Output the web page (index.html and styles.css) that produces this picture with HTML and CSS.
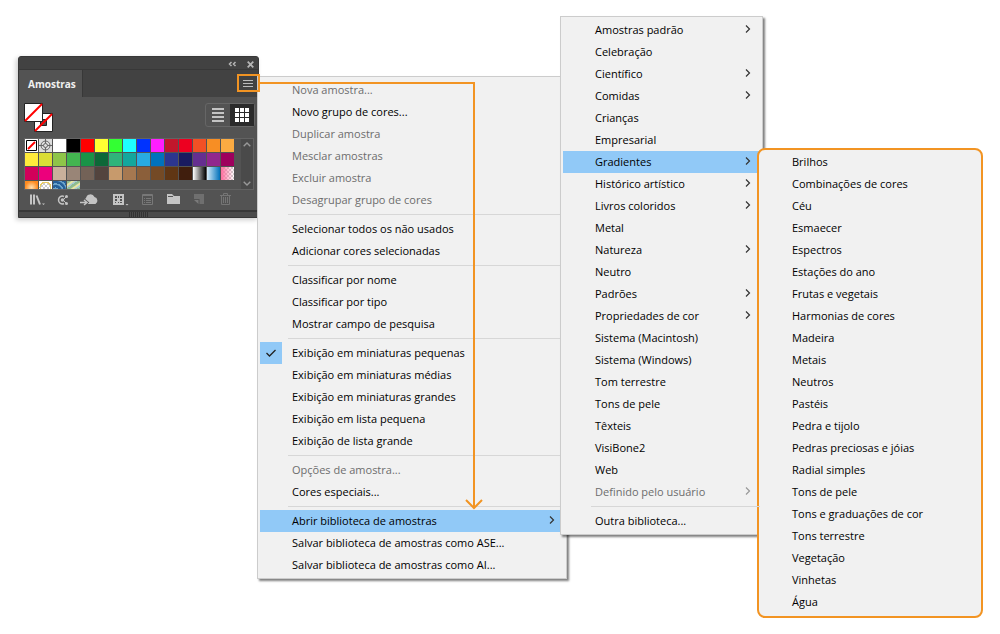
FILE: index.html
```html
<!DOCTYPE html>
<html lang="pt-BR">
<head>
    <meta charset="UTF-8">
    <meta name="viewport" content="width=device-width, initial-scale=1.0">
    <title>Amostras</title>
    <link rel="stylesheet" href="styles.css">
</head>
<body>
    <svg class="defs" width="0" height="0" aria-hidden="true">
        <symbol id="chevron" viewBox="0 0 6 10">
            <path d="M1 1.5 4.5 5 1 8.5" fill="none" stroke="currentColor" stroke-width="1.2"/>
        </symbol>
        <symbol id="check" viewBox="0 0 12 10">
            <path d="M1.5 5 4.5 8 10.5 2" fill="none" stroke="currentColor" stroke-width="1.3"/>
        </symbol>
    </svg>
    <div class="panel">
        <div class="panel-window">
            <div class="panel-bar">
                <button class="bar-btn" aria-label="Recolher">
                    <svg width="9" height="6" viewBox="0 0 9 6"><path d="M3.5 1 1.500 3l2 2M7.500 1l-2 2 2 2" fill="none" stroke="currentColor" stroke-width="1.5"/></svg>
                </button>
                <button class="bar-btn" aria-label="Fechar">
                    <svg width="7" height="7" viewBox="0 0 7 7"><path d="m.7.7 5.600 5.600M6.300.7.7 6.300" fill="none" stroke="currentColor" stroke-width="1.800"/></svg>
                </button>
            </div>
            <div class="panel-tabs">
                <button class="tab">Amostras</button>
                <button class="menu-btn" aria-label="Menu do painel">
                    <svg width="10" height="8" viewBox="0 0 10 8"><path d="M0 .5h10M0 3.500h10M0 6.500h10" stroke="currentColor"/></svg>
                </button>
            </div>
            <div class="panel-tools">
                <svg width="30" height="30" viewBox="0 0 30 30">
                    <path d="M10.500 10.500h18v18h-18z" fill="#fff" stroke="#222"/>
                    <path d="M16.500 16.500h6v6h-6z" fill="#535353" stroke="#222"/>
                    <path d="M11 28 28 11" stroke="#f00" stroke-width="2"/>
                    <path d="M.5.5h18v18H.5z" fill="#fff" stroke="#222"/>
                    <path d="M1 18 18 1" stroke="#f00" stroke-width="2"/>
                </svg>
                <div class="views">
                    <button class="view" aria-label="Lista">
                        <svg width="12" height="14" viewBox="0 0 12 14"><path d="M0 1h12M0 5h12M0 9h12M0 13h12" stroke="#c4c4c4" stroke-width="2"/></svg>
                    </button>
                    <button class="view view-active" aria-label="Miniaturas">
                        <svg width="14" height="14" viewBox="0 0 14 14"><path d="M0 2h14M0 7h14M0 12h14" stroke="#fff" stroke-width="4" stroke-dasharray="4 1"/></svg>
                    </button>
                </div>
            </div>
            <div class="swatch-box">
                <div class="swatches" id="swatches"></div>
                <div class="scroll">
                    <svg width="8" height="5" viewBox="0 0 8 5"><path d="M.7 4.300 4 1l3.300 3.300" fill="none" stroke="#999" stroke-width="1.400"/></svg>
                    <svg width="8" height="5" viewBox="0 0 8 5"><path d="M.7.7 4 4 7.300.7" fill="none" stroke="#999" stroke-width="1.400"/></svg>
                </div>
            </div>
            <div class="panel-actions">
                <button class="action" aria-label="Bibliotecas">
                    <svg width="17" height="14" viewBox="0 0 17 14"><path d="M2 1.500v10M5 1.500v10M7.500 2.500l3.500 9" fill="none" stroke="#c4c4c4" stroke-width="2"/><path d="M13 10.500h3L14.500 12z" fill="#c4c4c4"/></svg>
                </button>
                <button class="action" aria-label="Temas de cores">
                    <svg width="12" height="14" viewBox="0 0 12 14"><path d="M7 3.500C4.500 2 1.500 4 1.500 7s3 5 5.500 3.500" fill="none" stroke="#c4c4c4" stroke-width="1.500"/><circle cx="5.500" cy="7" r="1.800" fill="#c4c4c4"/><path d="m6 7 3-3M6 7l3 3" stroke="#c4c4c4"/><circle cx="9.500" cy="3.500" r="1.500" fill="#c4c4c4"/><circle cx="9.500" cy="10.500" r="1.500" fill="#c4c4c4"/></svg>
                </button>
                <button class="action" aria-label="Adicionar à biblioteca">
                    <svg width="19" height="14" viewBox="0 0 19 14"><path d="M6 10a3 3 0 0 1 0-5 4.500 4.500 0 0 1 8.500-1A3.800 3.800 0 0 1 15.500 11H8z" fill="#c4c4c4"/><path d="M0 9.500h6M4 7l3 2.500L4 12" fill="none" stroke="#535353" stroke-width="3"/><path d="M0 9.500h6M4 7l3 2.500L4 12" fill="none" stroke="#c4c4c4" stroke-width="1.500"/></svg>
                </button>
                <button class="action kinds" aria-label="Tipos de amostras">
                    <svg width="16" height="14" viewBox="0 0 16 14"><path d="M0 1h11v11H0z" fill="#c4c4c4"/><path d="M2 3h2v2H2zM5 3h1v2H5zM7 3h2v2H7zM2 6h2v2H2zM7 6h2v2H7zM2 9h1v1H2zM5 9h1v1H5zM7 9h2v1H7z" fill="#535353"/><path d="M12.500 11h3L14 12.500z" fill="#c4c4c4"/></svg>
                </button>
                <button class="action" aria-label="Opções de amostra">
                    <svg width="11" height="14" viewBox="0 0 11 14"><path d="M.5 1.500h10v10H.5z" fill="none" stroke="#787878"/><path d="M1 2.500h9M2 5.500h1M4 5.500h5M2 7.500h1M4 7.500h5M2 9.500h1M4 9.500h5" stroke="#787878"/></svg>
                </button>
                <button class="action" aria-label="Novo grupo de cores">
                    <svg width="13" height="14" viewBox="0 0 13 14"><path d="M0 1h5l2 2h6v8H0z" fill="#c4c4c4"/><path d="M1 3.500h5" stroke="#535353"/></svg>
                </button>
                <button class="action" aria-label="Nova amostra">
                    <svg width="10" height="14" viewBox="0 0 10 14"><path d="M0 1h10v10H5.500V6H0z" fill="#6f6f6f"/><path d="M0 7h4.500v4z" fill="#7a7a7a"/></svg>
                </button>
                <button class="action" aria-label="Excluir amostra">
                    <svg width="11" height="14" viewBox="0 0 11 14"><path d="M0 2.500h11M3.500 2V.5h4V2M1.500 3v8.500h8V3M3.500 4v6M5.500 4v6M7.500 4v6" fill="none" stroke="#757575"/></svg>
                </button>
            </div>
            <div class="panel-grip"><span></span></div>
        </div>

        <ul class="menu main-menu">
            <li><button disabled>Nova amostra...</button></li>
            <li><button>Novo grupo de cores...</button></li>
            <li><button disabled>Duplicar amostra</button></li>
            <li><button disabled>Mesclar amostras</button></li>
            <li><button disabled>Excluir amostra</button></li>
            <li><button disabled>Desagrupar grupo de cores</button></li>
            <li class="separator"></li>
            <li><button>Selecionar todos os não usados</button></li>
            <li><button>Adicionar cores selecionadas</button></li>
            <li class="separator"></li>
            <li><button>Classificar por nome</button></li>
            <li><button>Classificar por tipo</button></li>
            <li><button>Mostrar campo de pesquisa</button></li>
            <li class="separator"></li>
            <li><button><span class="checked"><svg width="12" height="10"><use href="#check"/></svg></span>Exibição em miniaturas pequenas</button></li>
            <li><button>Exibição em miniaturas médias</button></li>
            <li><button>Exibição em miniaturas grandes</button></li>
            <li><button>Exibição em lista pequena</button></li>
            <li><button>Exibição de lista grande</button></li>
            <li class="separator"></li>
            <li><button disabled>Opções de amostra...</button></li>
            <li><button>Cores especiais...</button></li>
            <li class="separator"></li>
            <li class="open">
                <button>Abrir biblioteca de amostras<svg class="chevron"><use href="#chevron"/></svg></button>
                <ul class="menu library-menu">
                    <li><button>Amostras padrão<svg class="chevron"><use href="#chevron"/></svg></button></li>
                    <li><button>Celebração</button></li>
                    <li><button>Científico<svg class="chevron"><use href="#chevron"/></svg></button></li>
                    <li><button>Comidas<svg class="chevron"><use href="#chevron"/></svg></button></li>
                    <li><button>Crianças</button></li>
                    <li><button>Empresarial</button></li>
                    <li class="open">
                        <button>Gradientes<svg class="chevron"><use href="#chevron"/></svg></button>
                        <ul class="menu gradient-menu">
                            <li><button>Brilhos</button></li>
                            <li><button>Combinações de cores</button></li>
                            <li><button>Céu</button></li>
                            <li><button>Esmaecer</button></li>
                            <li><button>Espectros</button></li>
                            <li><button>Estações do ano</button></li>
                            <li><button>Frutas e vegetais</button></li>
                            <li><button>Harmonias de cores</button></li>
                            <li><button>Madeira</button></li>
                            <li><button>Metais</button></li>
                            <li><button>Neutros</button></li>
                            <li><button>Pastéis</button></li>
                            <li><button>Pedra e tijolo</button></li>
                            <li><button>Pedras preciosas e jóias</button></li>
                            <li><button>Radial simples</button></li>
                            <li><button>Tons de pele</button></li>
                            <li><button>Tons e graduações de cor</button></li>
                            <li><button>Tons terrestre</button></li>
                            <li><button>Vegetação</button></li>
                            <li><button>Vinhetas</button></li>
                            <li><button>Água</button></li>
                        </ul>
                    </li>
                    <li><button>Histórico artístico<svg class="chevron"><use href="#chevron"/></svg></button></li>
                    <li><button>Livros coloridos<svg class="chevron"><use href="#chevron"/></svg></button></li>
                    <li><button>Metal</button></li>
                    <li><button>Natureza<svg class="chevron"><use href="#chevron"/></svg></button></li>
                    <li><button>Neutro</button></li>
                    <li><button>Padrões<svg class="chevron"><use href="#chevron"/></svg></button></li>
                    <li><button>Propriedades de cor<svg class="chevron"><use href="#chevron"/></svg></button></li>
                    <li><button>Sistema (Macintosh)</button></li>
                    <li><button>Sistema (Windows)</button></li>
                    <li><button>Tom terrestre</button></li>
                    <li><button>Tons de pele</button></li>
                    <li><button>Têxteis</button></li>
                    <li><button>VisiBone2</button></li>
                    <li><button>Web</button></li>
                    <li><button disabled>Definido pelo usuário<svg class="chevron"><use href="#chevron"/></svg></button></li>
                    <li class="separator"></li>
                    <li><button>Outra biblioteca...</button></li>
                </ul>
            </li>
            <li><button>Salvar biblioteca de amostras como ASE...</button></li>
            <li><button>Salvar biblioteca de amostras como AI...</button></li>
        </ul>

        <!-- path from the menu button to the open item -->
        <svg class="guide" width="246" height="437" viewBox="0 0 246 437" aria-hidden="true">
            <path d="M1 1h21v16H1z"/>
            <path d="M22 9h215v425M229 426l8 8 8-8"/>
        </svg>
    </div>
    <script>
        const rows = [
            ['none', 'registration', '#ffffff', '#000000', '#ff0000', '#ffff33', '#33ff33', '#1effff', '#0033ff', '#ff1eff', '#c1172c', '#ed0020', '#f15025', '#f78e24', '#fbab42'],
            ['#ffeb3b', '#dadd36', '#8ec549', '#43b550', '#199347', '#0d6838', '#2fb47a', '#14a79d', '#28abe2', '#0072bc', '#2c3690', '#191b60', '#652f90', '#91278d', '#9e005d'],
            ['#d2005a', '#ec007c', '#c9b09b', '#998577', '#736257', '#53443e', '#c79a6c', '#a67850', '#8b5f3a', '#744a25', '#603614', '#401e0d', 'fade', 'sky', 'pink'],
            ['glow', 'ring', 'waves', 'leaves']
        ];
        const swatches = document.getElementById('swatches');
        const icons = {
            none: '<svg width="13" height="13"><path d="M0 0h13v13H0z" fill="#fff"/><path d="M1.500 1.500h10v10h-10z" fill="#fff" stroke="#000"/><path d="m3 10 7-7" stroke="#f00" stroke-width="2"/></svg>',
            registration: '<svg width="13" height="13"><path d="M0 0h13v13H0z" fill="#ddd"/><path d="M6.500 0v13M0 6.500h13" stroke="#666"/><circle cx="6.500" cy="6.500" r="4.500" fill="none" stroke="#666"/><circle cx="6.500" cy="6.500" r="2" fill="#ddd" stroke="#666"/></svg>'
        };

        rows.flat().forEach(color => {
            const swatch = document.createElement('button');
            swatch.className = 'swatch';
            swatch.setAttribute('aria-label', color);
            if (color[0] === '#') {
                swatch.style.backgroundColor = color;
            } else if (icons[color]) {
                swatch.innerHTML = icons[color];
            } else {
                swatch.classList.add(color);
            }
            swatches.appendChild(swatch);
        });
    </script>
</body>
</html>
```
FILE: styles.css
```css
body {
    box-sizing: border-box;
    min-height: 100vh;
    margin: 0;
    padding: 56px 18px 0;
    background-color: #fff;
    font-family: "Open Sans", "Noto Sans", sans-serif;
    font-size: 11px;
    color: #000;
}
button {
    display: flex;
    align-items: center;
    margin: 0;
    padding: 0;
    border: 0;
    background: none;
    font: inherit;
    color: inherit;
}
.defs {
    position: absolute;
}
.panel {
    position: relative;
    width: 241px;
}
.panel-window {
    border: 1px solid #383838;
    border-radius: 3px 3px 0 0;
    background-color: #535353;
    box-shadow: -2px 2px 5px rgba(0, 0, 0, 0.2);
}
.panel-bar {
    display: flex;
    justify-content: flex-end;
    gap: 10px;
    height: 12px;
    padding-right: 4px;
    background-color: #424242;
    border-bottom: 1px solid #383838;
}
.bar-btn {
    padding-top: 2px;
    color: #b5b5b5;
}
.panel-tabs {
    display: flex;
    justify-content: space-between;
    height: 27px;
    background-color: #424242;
}
.tab {
    padding: 0 6px 0 9px;
    background-color: #535353;
    border-right: 1px solid #383838;
    font-size: 10px;
    font-weight: bold;
    color: #f0f0f0;
}
.menu-btn {
    justify-content: center;
    width: 20px;
    color: #bbb;
}
.panel-tools {
    display: flex;
    justify-content: space-between;
    padding: 6px 3px 5px 5px;
}
.views {
    display: flex;
    height: 22px;
    border: 1px solid #666;
    border-radius: 3px;
}
.view {
    justify-content: center;
    width: 24px;
}
.view-active {
    background-color: #2b2b2b;
}
.swatch-box {
    display: flex;
    justify-content: space-between;
    height: 50px;
    margin: 0 4px 0 5px;
    border: 1px solid #636363;
    overflow: hidden;
}
.swatches {
    display: grid;
    grid-template-columns: repeat(15, 13px);
    grid-auto-rows: 13px;
    gap: 1px;
}
.swatch {
    width: 13px;
    height: 13px;
}
.fade {
    background: linear-gradient(to right, #fff, #000);
}
.sky {
    background: linear-gradient(to right, #d5ebf8, #0071bb);
}
.pink {
    background: linear-gradient(to right, #ff6f9f, rgba(255, 111, 159, 0)), repeating-conic-gradient(#ccc 0 25%, #fff 0 50%) 0 0 / 4px 4px;
}
.glow {
    background: radial-gradient(circle at 50% 50%, #ffe0b0, #ff8a1e 70%);
}
.ring {
    background: radial-gradient(circle, transparent 5px, #e8cb62 5px, #e8cb62 6px, #fff 6px), repeating-conic-gradient(#ccc 0 25%, #fff 0 50%) 0 0 / 4px 4px;
}
.waves {
    background: repeating-radial-gradient(circle at 20% 80%, #24609a 0 2px, #6da5cb 3px 4px);
}
.leaves {
    background: repeating-linear-gradient(145deg, #8ebc91 0 2px, #e8e4a2 3px 4px, #a7cbd5 5px 6px);
}
.scroll {
    display: flex;
    flex-direction: column;
    align-items: center;
    justify-content: space-between;
    width: 12px;
    padding: 3px 0;
    background-color: #4a4a4a;
}
.panel-actions {
    display: flex;
    padding: 3px 20px 3px 5px;
}
.action {
    justify-content: center;
    width: 26px;
    height: 14px;
}
.kinds {
    margin-left: auto;
}
.panel-grip {
    display: flex;
    justify-content: center;
    height: 5px;
    background-color: #4b4b4b;
    border-top: 2px solid #383838;
}
.panel-grip span {
    width: 20px;
    background: repeating-linear-gradient(to right, #333 0 1px, transparent 1px 2px);
}

.menu {
    position: absolute;
    margin: 0;
    padding: 2px;
    box-sizing: border-box;
    list-style: none;
    background-color: #f1f1f1;
    border: 1px solid #ccc;
    box-shadow: 2px 2px 2px rgba(0, 0, 0, 0.5);
}
.menu li {
    position: relative;
}
.menu li > button {
    width: 100%;
    height: 22px;
    padding: 0 0 2px 32px;
    white-space: nowrap;
}
.menu button:disabled {
    color: #6d6d6d;
}
.menu .open > button {
    background-color: #91c9f7;
}
.menu .separator {
    height: 1px;
    margin: 3px 0 3px 28px;
    background-color: #d7d7d7;
}
.checked {
    display: flex;
    align-items: center;
    justify-content: center;
    width: 22px;
    height: 22px;
    margin: 0 10px -2px -32px;
    background-color: #91c9f7;
    color: #222;
}
.chevron {
    width: 6px;
    height: 10px;
    margin: 0 9px 0 auto;
    color: #333;
}
.menu button:disabled .chevron {
    color: #999;
}
.main-menu {
    top: 20px;
    left: calc(100% - 2px);
    width: 310px;
}
.library-menu {
    bottom: -3px;
    left: calc(100% - 4px);
    width: 203px;
}
.gradient-menu {
    top: -3px;
    left: calc(100% - 3px);
    width: 226px;
    padding: 1px 1px 3px;
    border: 2px solid #f29423;
    border-radius: 8px;
    box-shadow: none;
}
.guide {
    position: absolute;
    top: 18px;
    left: 219px;
    fill: none;
    stroke: #f29423;
    stroke-width: 2;
    pointer-events: none;
}
```
